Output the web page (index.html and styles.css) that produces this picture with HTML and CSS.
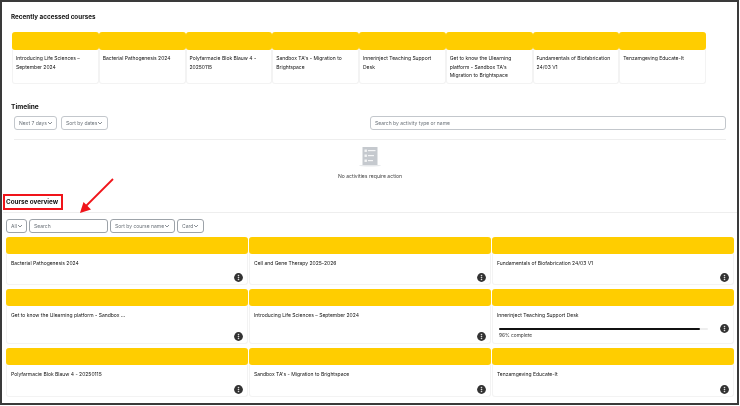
FILE: index.html
```html
<!DOCTYPE html>
<html lang="en">
<head>
<meta charset="utf-8">
<title>Dashboard</title>
<link rel="stylesheet" href="styles.css">
</head>
<body>
<svg class="defs" width="0" height="0" aria-hidden="true">
  <symbol id="chev" viewBox="0 0 6 4"><path d="M1 1l2 2 2-2" fill="none" stroke="currentColor" stroke-width=".8"/></symbol>
  <symbol id="dots" viewBox="0 0 9 9"><circle cx="4.5" cy="4.5" r="4.4" fill="#333"/><circle cx="4.5" cy="2.5" r=".8" fill="#ddd"/><circle cx="4.5" cy="4.5" r=".8" fill="#ddd"/><circle cx="4.5" cy="6.5" r=".8" fill="#ddd"/></symbol>
</svg>
<div class="frame">
  <section class="recent">
    <h2 class="heading">Recently accessed courses</h2>
    <div class="strip">
      <article class="tile"><div class="banner"></div><p class="tile-name">Introducing Life Sciences – September 2024</p></article>
      <article class="tile"><div class="banner"></div><p class="tile-name">Bacterial Pathogenesis 2024</p></article>
      <article class="tile"><div class="banner"></div><p class="tile-name">Polyfarmacie Blok Blauw 4 - 20250115</p></article>
      <article class="tile"><div class="banner"></div><p class="tile-name">Sandbox TA's - Migration to Brightspace</p></article>
      <article class="tile"><div class="banner"></div><p class="tile-name">Innerinject Teaching Support Desk</p></article>
      <article class="tile"><div class="banner"></div><p class="tile-name">Get to know the Ulearning platform - Sandbox TA's Migration to Brightspace</p></article>
      <article class="tile"><div class="banner"></div><p class="tile-name">Fundamentals of Biofabrication 24/03 V1</p></article>
      <article class="tile"><div class="banner"></div><p class="tile-name">Tenzamgeving Educate-It</p></article>
    </div>
  </section>

  <section class="timeline">
    <h2 class="heading timeline-title">Timeline</h2>
    <div class="tl-controls">
      <div class="select tl-days">Next 7 days <svg class="chev"><use href="#chev"/></svg></div>
      <div class="select tl-sort">Sort by dates <svg class="chev"><use href="#chev"/></svg></div>
      <div class="field tl-search">Search by activity type or name</div>
    </div>
    <hr class="rule">
    <div class="empty">
      <svg class="empty-icon" viewBox="0 0 24 20" aria-hidden="true">
        <ellipse cx="12" cy="18.6" rx="11" ry="1" fill="#e6e8ea"/>
        <rect x="4.5" y="0" width="15" height="18" fill="#c5c9ce"/>
        <g fill="#f4f5f6">
          <rect x="6.5" y="2.5" width="2.4" height="2.4"/><rect x="10" y="3" width="7.5" height="1.2"/>
          <rect x="6.5" y="7.5" width="2.4" height="2.4"/><rect x="10" y="8" width="6" height="1.2"/>
          <rect x="6.5" y="12.5" width="2.4" height="2.4"/><rect x="10" y="13" width="5" height="1.2"/>
        </g>
      </svg>
      <p class="empty-text">No activities require action</p>
    </div>
  </section>

  <section class="overview">
    <h2 class="heading overview-title">Course overview</h2>
    <hr class="rule overview-rule">
    <div class="filters">
      <div class="select dark f-all">All <svg class="chev"><use href="#chev"/></svg></div>
      <div class="field dark f-search">Search</div>
      <div class="select dark f-sort">Sort by course name <svg class="chev"><use href="#chev"/></svg></div>
      <div class="select dark f-card">Card <svg class="chev"><use href="#chev"/></svg></div>
    </div>
    <div class="cards">
      <article class="card"><div class="banner"></div><p class="card-name">Bacterial Pathogenesis 2024</p><div class="foot"><svg class="menu"><use href="#dots"/></svg></div></article>
      <article class="card"><div class="banner"></div><p class="card-name">Cell and Gene Therapy 2025-2026</p><div class="foot"><svg class="menu"><use href="#dots"/></svg></div></article>
      <article class="card"><div class="banner"></div><p class="card-name">Fundamentals of Biofabrication 24/03 V1</p><div class="foot"><svg class="menu"><use href="#dots"/></svg></div></article>
      <article class="card"><div class="banner"></div><p class="card-name">Get to know the Ulearning platform - Sandbox ...</p><div class="foot"><svg class="menu"><use href="#dots"/></svg></div></article>
      <article class="card"><div class="banner"></div><p class="card-name">Introducing Life Sciences – September 2024</p><div class="foot"><svg class="menu"><use href="#dots"/></svg></div></article>
      <article class="card"><div class="banner"></div><p class="card-name">Innerinject Teaching Support Desk</p>
        <div class="foot foot-progress">
          <div class="progress"><div class="track"><div class="fill" style="width:96%"></div></div><div class="pct">96% complete</div></div>
          <svg class="menu"><use href="#dots"/></svg>
        </div>
      </article>
      <article class="card"><div class="banner"></div><p class="card-name">Polyfarmacie Blok Blauw 4 - 20250115</p><div class="foot"><svg class="menu"><use href="#dots"/></svg></div></article>
      <article class="card"><div class="banner"></div><p class="card-name">Sandbox TA's - Migration to Brightspace</p><div class="foot"><svg class="menu"><use href="#dots"/></svg></div></article>
      <article class="card"><div class="banner"></div><p class="card-name">Tenzamgeving Educate-It</p><div class="foot"><svg class="menu"><use href="#dots"/></svg></div></article>
    </div>
  </section>

  <svg class="arrow" viewBox="0 0 40 40" aria-hidden="true">
    <path d="M36 2L9 29" stroke="#f0141a" stroke-width="1.8" fill="none"/>
    <path d="M3 36l3.500-11 7.500 7.500z" fill="#f0141a"/>
  </svg>
</div>
</body>
</html>
```
FILE: styles.css
```css
* { box-sizing: border-box; }
html, body { margin: 0; padding: 0; background: #fff; }
body { font-family: "Inter", "Liberation Sans", sans-serif; color: #222; }
.defs { position: absolute; }
p, h2 { margin: 0; }

.frame {
  position: relative;
  width: 739px;
  height: 405px;
  border: 2px solid #3a3a3a;
  background: #fff;
  overflow: hidden;
  filter: blur(0.4px);
}

.heading { font-size: 6.3px; line-height: 10px; font-weight: 700; color: #111; white-space: nowrap; }

.recent { padding: 10px 0 0 9px; }
.strip {
  display: grid;
  grid-template-columns: repeat(8, 86.75px);
  margin: 10px 0 0 1px;
}
.tile {
  height: 52px;
  border: 1px solid #f3f3f3;
  border-top: 0;
  border-radius: 3px;
}
.banner { height: 18px; margin: 0 -1px; background: #ffcd00; border-radius: 3px; }
.tile-name {
  padding: 4px 5px 0 3px;
  font-size: 5px;
  line-height: 8.5px;
  color: #111;
}

.timeline { padding: 18px 11px 0 12px; }
.timeline-title { margin-left: -3px; font-size: 6.6px; }
.tl-controls { display: flex; gap: 4px; margin-top: 4px; }
.select, .field {
  display: flex;
  align-items: center;
  height: 14px;
  border: 1px solid #c3c7cc;
  border-radius: 3px;
  font-size: 5px;
  color: #6a7178;
  background: #fff;
  white-space: nowrap;
}
.select { justify-content: space-between; padding: 0 4px; }
.field { padding: 0 4px; }
.dark { border-color: #9da3a9; height: 13.5px; }
.chev { width: 6px; height: 4px; flex: none; }
.tl-days { width: 43px; }
.tl-sort { width: 47px; }
.tl-search { width: 356px; margin-left: auto; }

.rule { margin: 0; border: 0; border-top: 1px solid #eeeeee; }
.timeline .rule { margin-top: 9px; }

.empty { display: flex; flex-direction: column; align-items: center; margin-top: 7px; }
.empty-icon { width: 24px; height: 20px; display: block; }
.empty-text { margin-top: 5px; font-size: 5.1px; line-height: 8px; color: #444; }

.overview { padding: 14px 0 0 1px; }
.overview-title {
  width: 60px;
  height: 16px;
  padding-left: 1px;
  border: 2px solid #f0141a;
  line-height: 12px;
}
.overview-rule { margin-top: 2px; }
.filters { display: flex; gap: 2px; margin: 6px 0 0 3px; }
.f-all { width: 21px; }
.f-search { width: 79px; }
.f-sort { width: 65px; }
.f-card { width: 27px; }

.cards {
  display: grid;
  grid-template-columns: repeat(3, 242px);
  grid-template-rows: 48px 55px 49px;
  column-gap: 1px;
  row-gap: 4px;
  margin: 4px 0 0 3px;
}
.card {
  display: flex;
  flex-direction: column;
  border: 1px solid #f3f3f3;
  border-top: 0;
  border-radius: 3px;
}
.card .banner { height: 17.5px; flex: none; }
.card-name {
  padding: 5px 0 0 4px;
  font-size: 5px;
  line-height: 8px;
  color: #111;
}
.foot { display: flex; justify-content: flex-end; margin-top: auto; padding: 0 4px 2px 0; }
.menu { width: 9px; height: 9px; display: block; flex: none; }
.foot-progress { align-items: flex-start; padding-bottom: 5px; }
.progress { flex: none; width: 209px; margin: 0 auto 0 6px; }
.track { height: 2px; margin-top: 4px; background: #eeeeee; border-radius: 1px; }
.fill { height: 100%; background: #111; border-radius: 1px; }
.pct { margin-top: 2px; font-size: 4.8px; line-height: 6px; color: #333; }

.arrow { position: absolute; left: 75px; top: 175px; width: 40px; height: 40px; }
```
